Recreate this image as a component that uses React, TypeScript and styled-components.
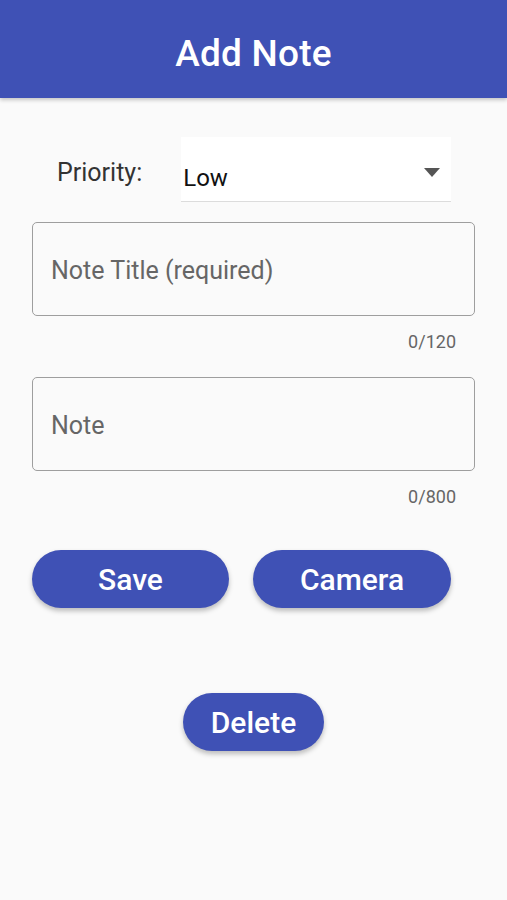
import React, { useState } from "react";
import styled, { createGlobalStyle } from "styled-components";

const GlobalStyle = createGlobalStyle`
  html, body {
    margin: 0;
    padding: 0;
    background: #fafafa;
    font-family: Roboto, "Noto Sans", "Liberation Sans", sans-serif;
  }
`;

const Screen = styled.div`
  width: 507px;
  min-height: 900px;
  background: #fafafa;
  display: flex;
  flex-direction: column;
`;

const AppBar = styled.header`
  height: 98px;
  box-sizing: border-box;
  padding-top: 8px;
  background: #3f51b5;
  display: flex;
  align-items: center;
  justify-content: center;
  box-shadow: 0 2px 4px rgba(0, 0, 0, 0.22);
`;

const AppTitle = styled.h1`
  margin: 0;
  color: #fff;
  font-size: 37px;
  font-weight: 500;
  letter-spacing: 0.2px;
`;

const Form = styled.div`
  display: flex;
  flex-direction: column;
  padding: 39px 32px 0 32px;
`;

const PriorityRow = styled.div`
  display: flex;
  align-items: center;
  padding-left: 25px;
  gap: 39px;
`;

const Label = styled.span`
  font-size: 25px;
  color: #333;
  margin-top: 6px;
`;

const Select = styled.div`
  width: 270px;
  height: 65px;
  background: #fff;
  border-bottom: 1px solid #dcdcdc;
  display: flex;
  align-items: center;
  justify-content: space-between;
  padding: 18px 11px 0 2px;
  box-sizing: border-box;
  font-size: 24px;
  color: #111;
`;

const Caret = styled.svg`
  width: 16px;
  height: 9px;
  margin-top: -12px;
`;

const Field = styled.div<{ $top: number }>`
  margin-top: ${(p) => p.$top}px;
  display: flex;
  flex-direction: column;
`;

const InputBox = styled.input`
  width: 100%;
  height: 94px;
  box-sizing: border-box;
  border: 1.5px solid #9e9e9e;
  border-radius: 5px;
  background: transparent;
  padding: 3px 18px 0;
  font-family: inherit;
  font-size: 25px;
  color: #222;
  outline: none;

  &::placeholder {
    color: #666;
  }
`;

const Counter = styled.span`
  align-self: flex-end;
  margin: 15px 19px 0 0;
  font-size: 18px;
  color: #666;
`;

const ButtonRow = styled.div`
  display: flex;
  gap: 24px;
  margin-top: 43px;
`;

const PillButton = styled.button<{ $width?: number }>`
  width: ${(p) => (p.$width ? `${p.$width}px` : "auto")};
  height: 58px;
  padding: 0 28px;
  border: none;
  border-radius: 29px;
  background: #3f51b5;
  color: #fff;
  font-family: inherit;
  font-size: 30px;
  font-weight: 500;
  box-shadow: 0 3px 5px rgba(0, 0, 0, 0.25);
  cursor: pointer;
`;

const DeleteRow = styled.div`
  display: flex;
  justify-content: center;
  margin-top: 85px;
`;

export default function App() {
  const [title, setTitle] = useState("");
  const [note, setNote] = useState("");

  return (
    <>
      <GlobalStyle />
      <Screen>
        <AppBar>
          <AppTitle>Add Note</AppTitle>
        </AppBar>

        <Form>
          <PriorityRow>
            <Label>Priority:</Label>
            <Select>
              <span>Low</span>
              <Caret viewBox="0 0 16 9">
                <path d="M0 0 L16 0 L8 9 Z" fill="#555" />
              </Caret>
            </Select>
          </PriorityRow>

          <Field $top={20}>
            <InputBox
              placeholder="Note Title (required)"
              value={title}
              maxLength={120}
              onChange={(e) => setTitle(e.target.value)}
            />
            <Counter>{title.length}/120</Counter>
          </Field>

          <Field $top={25}>
            <InputBox
              placeholder="Note"
              value={note}
              maxLength={800}
              onChange={(e) => setNote(e.target.value)}
            />
            <Counter>{note.length}/800</Counter>
          </Field>

          <ButtonRow>
            <PillButton $width={197}>Save</PillButton>
            <PillButton $width={198}>Camera</PillButton>
          </ButtonRow>

          <DeleteRow>
            <PillButton>Delete</PillButton>
          </DeleteRow>
        </Form>
      </Screen>
    </>
  );
}
